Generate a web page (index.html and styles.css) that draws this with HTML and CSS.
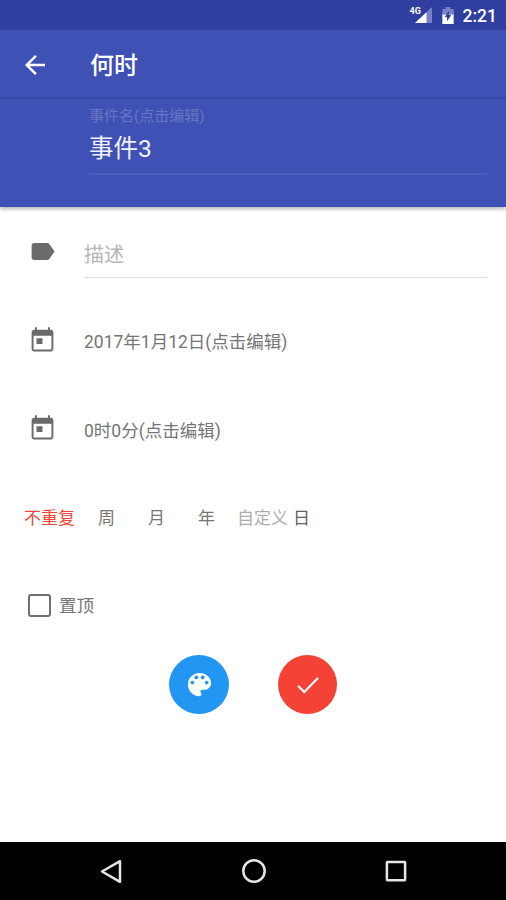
FILE: index.html
```html
<!DOCTYPE html>
<html lang="zh-CN">
<head>
<meta charset="utf-8">
<title>何时</title>
<link rel="stylesheet" href="styles.css">
</head>
<body>
<div class="screen">
  <div class="statusbar">
    <div class="signal">
      <svg width="22" height="22" viewBox="0 0 22 22"><path d="M22 5v16H5z" fill="#7682c4"/><path d="M16.500 10.200V21H5z" fill="#fff"/></svg>
      <span class="network">4G</span>
    </div>
    <svg class="battery" width="12" height="17" viewBox="0 0 12 18"><path d="M3.500 0h5v2H12v7H0V2h3.500z" fill="#7682c4"/><path d="M0 8h12v10H0z" fill="#fff"/><path d="M7 4L2.500 10.500H5V15l4.500-6.500H7z" fill="#303f9f"/></svg>
    <span class="clock">2:21</span>
  </div>
  <header class="toolbar">
    <svg class="back" width="30" height="30" viewBox="0 0 24 24"><path d="M20 11H7.830l5.590-5.590L12 4l-8 8 8 8 1.410-1.410L7.830 13H20v-2z" fill="#fff"/></svg>
    <h1 class="title">何时</h1>
  </header>
  <section class="event">
    <label class="hint">事件名(点击编辑)</label>
    <div class="name">事件3</div>
  </section>
  <main class="form">
    <div class="row description">
      <svg class="icon" width="29" height="29" viewBox="0 0 24 24"><path d="M17.630 5.840C17.270 5.330 16.670 5 16 5L5 5.010C3.900 5.010 3 5.900 3 7v10c0 1.100.9 1.990 2 1.990L16 19c.67 0 1.270-.33 1.630-.84L22 12l-4.370-6.160z"/></svg>
      <div class="input">描述</div>
    </div>
    <div class="row date">
      <svg class="icon" width="29" height="29" viewBox="0 0 24 24"><path d="M19 3h-.8V1h-1.600v2H7.400V1H5.800v2H5c-1.110 0-1.990.9-1.990 2L3 19c0 1.100.89 2 2 2h14c1.100 0 2-.9 2-2V5c0-1.100-.9-2-2-2zm.4 16.400H4.600V8h14.800v11.400zM7 10.200h5v4.600H7v-4.600z"/></svg>
      <div class="value">2017年1月12日(点击编辑)</div>
    </div>
    <div class="row time">
      <svg class="icon" width="29" height="29" viewBox="0 0 24 24"><path d="M19 3h-.8V1h-1.600v2H7.400V1H5.800v2H5c-1.110 0-1.990.9-1.990 2L3 19c0 1.100.89 2 2 2h14c1.100 0 2-.9 2-2V5c0-1.100-.9-2-2-2zm.4 16.400H4.600V8h14.800v11.400zM7 10.200h5v4.600H7v-4.600z"/></svg>
      <div class="value">0时0分(点击编辑)</div>
    </div>
    <div class="repeat">
      <span class="none">不重复</span><span class="unit">周</span><span class="unit">月</span><span class="unit">年</span><span class="custom">自定义</span><span class="day">日</span>
    </div>
    <div class="pin">
      <span class="checkbox"></span>
      <span>置顶</span>
    </div>
    <div class="actions">
      <div class="fab blue"><svg width="31" height="31" viewBox="0 0 24 24"><path d="M12 3c-4.970 0-9 4.030-9 9s4.030 9 9 9c.83 0 1.500-.67 1.500-1.500 0-.39-.15-.74-.39-1.010-.23-.26-.38-.61-.38-.99 0-.83.67-1.500 1.500-1.500H16c2.760 0 5-2.240 5-5 0-4.420-4.030-8-9-8zm-5.500 9c-.83 0-1.500-.67-1.500-1.500S5.670 9 6.500 9 8 9.670 8 10.500 7.330 12 6.500 12zm3-4C8.670 8 8 7.330 8 6.500S8.670 5 9.500 5s1.500.67 1.500 1.500S10.330 8 9.500 8zm5 0c-.83 0-1.500-.67-1.500-1.500S13.670 5 14.500 5s1.500.67 1.500 1.500S15.330 8 14.500 8zm3 4c-.83 0-1.500-.67-1.500-1.500S16.670 9 17.500 9s1.500.67 1.500 1.500-.67 1.500-1.500 1.500z" fill="#fff"/></svg></div>
      <div class="fab red"><svg width="30" height="30" viewBox="0 0 24 24"><path d="M9 16.400L4.600 12l-1.190 1.190L9 18.780 20.780 6.780l-1.190-1.190z" fill="#fff"/></svg></div>
    </div>
  </main>
  <nav class="navbar">
    <svg width="24" height="26" viewBox="0 0 24 26"><path d="M21 3.200v20.600L3 13.500z" fill="none" stroke="#e6e6e6" stroke-width="2.500" stroke-linejoin="round"/></svg>
    <svg width="26" height="26" viewBox="0 0 26 26"><circle cx="13" cy="13" r="10.700" fill="none" stroke="#e6e6e6" stroke-width="2.500"/></svg>
    <svg width="24" height="26" viewBox="0 0 24 26"><rect x="2.900" y="4" width="18.200" height="18.200" rx=".5" fill="none" stroke="#e6e6e6" stroke-width="2.500"/></svg>
  </nav>
</div>
</body>
</html>
```
FILE: styles.css
```css
* { box-sizing: border-box; }
body {
  margin: 0;
  background: #fff;
  font-family: Roboto, "Noto Sans CJK SC", sans-serif;
  color: #757575;
}
svg { display: block; flex: none; }
.screen { width: 506px; height: 900px; display: flex; flex-direction: column; overflow: hidden; }
.statusbar {
  height: 30px;
  flex: none;
  background: #303f9f;
  display: flex;
  align-items: flex-start;
  justify-content: flex-end;
  padding: 0 9px 0 0;
  color: #fff;
}
.signal { position: relative; margin: 2px 10px 0 0; }
.network { position: absolute; left: 0; top: 4px; font-size: 9px; line-height: 10px; font-weight: 700; }
.battery { margin: 7px 9px 0 0; }
.clock { font-size: 17.5px; font-weight: 500; line-height: 32px; }
.toolbar {
  height: 69px;
  flex: none;
  background: #3f51b5;
  border-bottom: 2px solid #384aa9;
  display: flex;
  align-items: center;
  padding-left: 20px;
}
.back { margin-top: 2px; }
.title { margin: 4px 0 0 40px; font-size: 24px; line-height: 36px; font-weight: 500; color: #fff; }
.event {
  height: 108px;
  flex: none;
  background: #3f51b5;
  padding: 7px 19px 0 89px;
  box-shadow: 0 2px 4px rgba(0, 0, 0, .3);
  z-index: 1;
}
.hint { display: block; font-size: 15px; line-height: 21px; color: #6875c3; }
.name { height: 48px; padding-top: 4px; font-size: 24.5px; line-height: 36px; color: #f1f2fa; border-bottom: 2px solid #4c5dbe; }
.form { flex: 1; }
.row { display: flex; padding: 0 19px 0 28px; font-size: 17.5px; }
.icon { fill: #6b6b6b; }
.row .input, .row .value { margin-left: 27px; }
.description { padding-top: 30px; height: 119px; }
.input { flex: 1; height: 41px; padding-top: 3px; font-size: 20px; line-height: 30px; color: #b5b5b5; border-bottom: 1px solid #dedede; }
.value { line-height: 33px; }
.date { height: 88px; }
.time { height: 88px; }
.time .value { line-height: 34px; }
.repeat { display: flex; height: 90px; padding: 3px 0 0 24px; font-size: 17px; line-height: 26px; }
.none { color: #f44336; width: 74px; }
.unit { width: 50px; }
.custom { color: #adadad; margin-left: -11px; width: 56px; }
.day { color: #616161; }
.pin { display: flex; align-items: center; height: 26px; padding-left: 28px; font-size: 17.5px; line-height: 26px; }
.pin span:last-child { margin-top: 2px; }
.checkbox { width: 23px; height: 23px; border: 2px solid #707070; border-radius: 3px; margin-right: 8px; }
.actions { display: flex; gap: 49px; padding: 37px 0 0 169px; }
.fab { width: 59px; height: 59px; border-radius: 50%; display: flex; align-items: center; justify-content: center; }
.blue { background: #2196f3; width: 60px; }
.red { background: #f44336; }
.navbar {
  height: 58px;
  flex: none;
  background: #000;
  display: flex;
  align-items: center;
  justify-content: space-between;
  padding: 0 98px 0 99px;
}
```
